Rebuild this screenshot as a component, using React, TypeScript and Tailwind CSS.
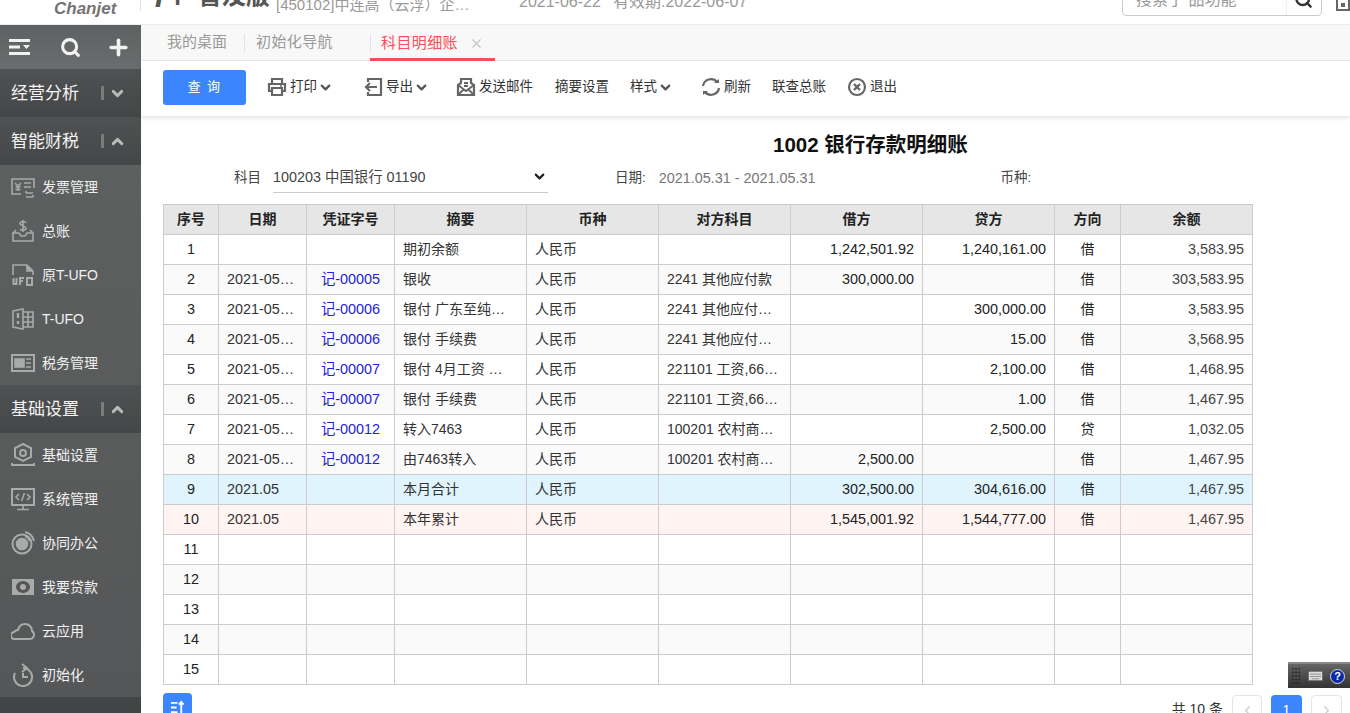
import { ChevronDown, ChevronUp, ChevronLeft, ChevronRight, Search, Plus, X } from "lucide-react";

const font = { fontFamily: '"Liberation Sans", "Noto Sans CJK SC", sans-serif' };

type Row = {
  no: number;
  date?: string;
  voucher?: string;
  summary?: string;
  cur?: string;
  other?: string;
  debit?: string;
  credit?: string;
  dir?: string;
  bal?: string;
  tone?: string;
};

const rows: Row[] = [
  { no: 1, summary: "期初余额", cur: "人民币", debit: "1,242,501.92", credit: "1,240,161.00", dir: "借", bal: "3,583.95" },
  { no: 2, date: "2021-05…", voucher: "记-00005", summary: "银收", cur: "人民币", other: "2241 其他应付款", debit: "300,000.00", dir: "借", bal: "303,583.95" },
  { no: 3, date: "2021-05…", voucher: "记-00006", summary: "银付 广东至纯…", cur: "人民币", other: "2241 其他应付…", credit: "300,000.00", dir: "借", bal: "3,583.95" },
  { no: 4, date: "2021-05…", voucher: "记-00006", summary: "银付 手续费", cur: "人民币", other: "2241 其他应付…", credit: "15.00", dir: "借", bal: "3,568.95" },
  { no: 5, date: "2021-05…", voucher: "记-00007", summary: "银付 4月工资 …", cur: "人民币", other: "221101 工资,66…", credit: "2,100.00", dir: "借", bal: "1,468.95" },
  { no: 6, date: "2021-05…", voucher: "记-00007", summary: "银付 手续费", cur: "人民币", other: "221101 工资,66…", credit: "1.00", dir: "借", bal: "1,467.95" },
  { no: 7, date: "2021-05…", voucher: "记-00012", summary: "转入7463", cur: "人民币", other: "100201 农村商…", credit: "2,500.00", dir: "贷", bal: "1,032.05" },
  { no: 8, date: "2021-05…", voucher: "记-00012", summary: "由7463转入", cur: "人民币", other: "100201 农村商…", debit: "2,500.00", dir: "借", bal: "1,467.95" },
  { no: 9, date: "2021.05", summary: "本月合计", cur: "人民币", debit: "302,500.00", credit: "304,616.00", dir: "借", bal: "1,467.95", tone: "bg-[#dff4fd]" },
  { no: 10, date: "2021.05", summary: "本年累计", cur: "人民币", debit: "1,545,001.92", credit: "1,544,777.00", dir: "借", bal: "1,467.95", tone: "bg-[#fff4f1]" },
  { no: 11 },
  { no: 12 },
  { no: 13 },
  { no: 14 },
  { no: 15 },
];

const heads = ["序号", "日期", "凭证字号", "摘要", "币种", "对方科目", "借方", "贷方", "方向", "余额"];
const widths = ["w-[55px]", "w-[88px]", "w-[88px]", "w-[132px]", "w-[132px]", "w-[132px]", "w-[132px]", "w-[132px]", "w-[66px]", "w-[132px]"];

function Icon({ children }: { children: React.ReactNode }) {
  return (
    <svg viewBox="0 0 24 24" className="w-[24px] h-[24px] shrink-0" fill="none" stroke="#a9abab" strokeWidth={1.6}>
      {children}
    </svg>
  );
}

const smartItems: [string, React.ReactNode][] = [
  ["发票管理", <Icon><path d="M10 19H1V4h22v9" /><path d="M4 8l3 3 3-3M7 11v5M4.500 12h5M4.500 14.500h5M13 8h7M13 12h7" /><path d="M15 18h7M15 22h7M15 16v2M22 20v2" /></Icon>],
  ["总账", <Icon><path d="M2 14v8h20v-8l-3-3M5 11l-3 3h6l2 3h4l2-3h6" /><path d="M15 4c-1-2-5-2-6 0s5 3 6 5-5 3-6 1M12 1v12" /></Icon>],
  ["原T-UFO", <Icon><path d="M2 12V2h14l6 6v4" /><path d="M16 2v6h6" fill="#a9abab" /><path d="M2.500 15v6h3v-6M9 22v-7h4M9 18h3M16 15h5v7h-5z" strokeWidth={2} /></Icon>],
  ["T-UFO", <Icon><path d="M2 4l10-2v20L2 20zM12 5h10v15H12M12 10h10M12 15h10M17 5v15" /><path d="M7 6v5M7 14v3" strokeWidth={2.400} /></Icon>],
  ["税务管理", <Icon><rect x="1" y="4" width="22" height="16" strokeWidth={2} /><rect x="4" y="8" width="9" height="8" fill="#a9abab" /><path d="M15 8h5M15 12h5M15 16h5" /></Icon>],
];

const baseItems: [string, React.ReactNode][] = [
  ["基础设置", <Icon><path d="M12 1l8 4v9l-8 4-8-4V5z" strokeWidth={2} /><circle cx="12" cy="10" r="3" strokeWidth={2} /><path d="M1 20v2h22v-2" strokeWidth={2} /></Icon>],
  ["系统管理", <Icon><rect x="1" y="2" width="22" height="16" strokeWidth={2} /><path d="M8 7l-3 3 3 3M16 7l3 3-3 3M13.500 6l-3 8M12 18v4M6 22.500h12" /></Icon>],
  ["协同办公", <Icon><circle cx="11" cy="13" r="9.500" strokeWidth={2} /><circle cx="11" cy="13" r="5.500" fill="#a9abab" /><path d="M14 1c5 1 8 5 9 9M14 5c3 1 4 3 5 5" strokeWidth={2} /></Icon>],
  ["我要贷款", <Icon><rect x="1" y="4" width="22" height="16" fill="#a9abab" stroke="none" /><ellipse cx="12" cy="12" rx="7" ry="6" fill="#555" stroke="none" /><circle cx="12" cy="12" r="3" fill="#a9abab" stroke="none" /></Icon>],
  ["云应用", <Icon><path d="M6 20H4a3.500 3.500 0 0 1-1-7c1-1 2-2 4-2 1-4 4-6 7-6 4 0 7 3 7 7 2 1 2 3 2 4s-1 4-4 4z" strokeWidth={2} /></Icon>],
  ["初始化", <Icon><path d="M12 5a9 9 0 1 1-8 5" strokeWidth={2} /><path d="M11 1l5 4-5 4M12 10v4h5" strokeWidth={2} /></Icon>],
];

function Group({ label, open }: { label: string; open: boolean }) {
  return (
    <div className="h-[48px] shrink-0 flex items-center pl-[11px] bg-gradient-to-b from-[#4f5152] to-[#454647]">
      <span className="w-[90px] text-[17px] text-[#f4f4f4] pt-[2px]">{label}</span>
      <span className="w-[3px] h-[14px] bg-[#7a7c7c]" />
      <span className="ml-[5px] text-[#b9bbbb]">
        {open ? <ChevronUp size={17} strokeWidth={4} /> : <ChevronDown size={17} strokeWidth={4} />}
      </span>
    </div>
  );
}

function MenuItem({ label, icon }: { label: string; icon: React.ReactNode }) {
  return (
    <div className="h-[44px] flex items-center pl-[11px] gap-[7px] text-[14px] text-[#f1f1f1]">
      {icon}
      <span>{label}</span>
    </div>
  );
}

function ToolBtn({ icon, label, more, className }: { icon?: React.ReactNode; label: string; more?: boolean; className?: string }) {
  return (
    <div className={`flex items-center text-[13.500px] text-[#333] ${className ?? ""}`}>
      {icon}
      <span className={icon ? "ml-[3px]" : ""}>{label}</span>
      {more && <ChevronDown size={15} strokeWidth={3.500} className="ml-[1px] text-[#555]" />}
    </div>
  );
}

function Glyph({ children }: { children: React.ReactNode }) {
  return (
    <svg viewBox="0 0 20 20" className="w-[20px] h-[20px] shrink-0" fill="none" stroke="#666" strokeWidth={2.200}>
      {children}
    </svg>
  );
}

function Watermark({ className }: { className: string }) {
  return (
    <div className={`absolute -rotate-[22deg] text-[21px] leading-[27px] tracking-[1px] text-black/[0.02] pointer-events-none ${className}`}>
      <div>林冬菁8338</div>
      <div>06220852</div>
    </div>
  );
}

export default function App() {
  return (
    <div style={font} className="relative w-[1350px] h-[713px] overflow-hidden bg-white flex flex-col">
      {/* Top bar, scrolled partly out of view */}
      <header className="h-[25px] shrink-0 overflow-hidden flex items-start border-b border-[#eeeeee]">
        <div className="w-[140px] shrink-0 pl-[54px] text-[#747474] font-bold italic text-[17px] leading-[18px]">Chanjet</div>
        <div className="w-[1px] h-[11px] bg-[#e0e0e0]" />
        <span className="ml-[9px] w-[48px] mt-[-18px] text-[#555] font-bold italic text-[30px] leading-[30px]">T+</span>
        <span className="w-[72px] mt-[-16px] text-[#555] font-bold text-[24px] leading-[24px] whitespace-nowrap">普及版</span>
        <span className="ml-[6px] w-[243px] mt-[-5px] text-[#999] text-[15px] leading-[20px] whitespace-nowrap">[450102]中连高（云浮）企…</span>
        <span className="w-[94px] mt-[-8px] text-[#999] text-[16px] leading-[20px] whitespace-nowrap">2021-06-22</span>
        <span className="mt-[-8px] text-[#999] text-[16px] leading-[20px] whitespace-nowrap">有效期:2022-06-07</span>
        <div className="relative ml-auto w-[200px] h-[40px] mt-[-24px] border border-[#cccccc] rounded-[4px] flex items-end pl-[13px] pb-[5px]">
          <span className="text-[16px] leading-[20px] text-[#999] whitespace-nowrap">搜索子 品功能</span>
          <span className="absolute right-[34px] top-0 bottom-0 w-[1px] bg-[#f0f0f0]" />
          <Search size={19} strokeWidth={3} className="absolute right-[8px] bottom-[6px] text-[#333]" />
        </div>
        <div className="ml-[14px] w-[14px] h-[11px] border-2 border-t-0 border-[#666] flex justify-center">
          <span className="mt-[3px] w-[4px] h-[4px] bg-[#666]" />
        </div>
      </header>

      <div className="flex flex-1 min-h-0">
        {/* Sidebar */}
        <aside className="w-[141px] shrink-0 flex flex-col bg-gradient-to-b from-[#5f6262] to-[#555657]">
          <div className="h-[44px] shrink-0 flex items-center bg-gradient-to-b from-[#5e6162] to-[#6a6c6d] text-[#f2f2f2]">
            <svg viewBox="0 0 22 16" className="ml-[9px] w-[22px] h-[16px]" fill="#f2f2f2">
              <rect x="0" y="0" width="21" height="3" />
              <rect x="0" y="6.500" width="11" height="3" />
              <rect x="0" y="13" width="21" height="3" />
              <path d="M14 6h7l-3.500 4z" />
            </svg>
            <Search size={21} strokeWidth={3.500} className="ml-[29px]" />
            <Plus size={25} strokeWidth={3.500} className="ml-[25px]" />
          </div>
          <Group label="经营分析" open={false} />
          <Group label="智能财税" open />
          <div>
            {smartItems.map(([l, i]) => (
              <MenuItem key={l} label={l} icon={i} />
            ))}
          </div>
          <Group label="基础设置" open />
          <div>
            {baseItems.map(([l, i]) => (
              <MenuItem key={l} label={l} icon={i} />
            ))}
          </div>
          <div className="flex-1 bg-[#434445]" />
        </aside>

        <main className="flex-1 min-w-0 flex flex-col">
          {/* Tabs */}
          <div className="h-[36px] shrink-0 flex items-stretch bg-[#f8f8f8] border-b border-[#e6e6ee] text-[15px] text-[#999]">
            <div className="w-[103px] flex items-center pl-[26px] whitespace-nowrap">我的桌面</div>
            <div className="w-[1px] h-[18px] self-center bg-[#e2e2e8]" />
            <div className="w-[125px] flex items-center pl-[11px] whitespace-nowrap tracking-[0.4px]">初始化导航</div>
            <div className="w-[125px] flex items-center pl-[11px] text-[#ff4d59] border-b-[3px] border-[#ff4d59] pt-[3px] -mb-[1px] whitespace-nowrap tracking-[0.4px] relative">
              <span className="absolute left-0 top-[9px] w-[1px] h-[18px] bg-[#e2e2e8]" />
              科目明细账
              <X size={15} strokeWidth={1.800} className="ml-[11px] text-[#c4c4c4]" />
            </div>
          </div>

          {/* Toolbar */}
          <div className="h-[55px] shrink-0 flex items-center pl-[22px] pb-[3px] shadow-[0_2px_4px_rgba(0,0,0,0.12)] relative z-10 bg-white">
            <button className="w-[83px] h-[35px] rounded-[3px] bg-[#3b86ff] text-white text-[13px] tracking-[1.500px]">查 询</button>
            <ToolBtn
              className="ml-[21px]"
              label="打印"
              more
              icon={
                <Glyph>
                  <path d="M5 6V2h10v4M5 14H2V7h16v7h-3" />
                  <path d="M5 11h10v7H5z" />
                  <path d="M13 9h2" strokeWidth={1.500} />
                </Glyph>
              }
            />
            <ToolBtn
              className="ml-[30px]"
              label="导出"
              more
              icon={
                <Glyph>
                  <path d="M5 5V2h13v16H5v-3" />
                  <path d="M14 10H3M7 6l-4 4 4 4" />
                </Glyph>
              }
            />
            <ToolBtn
              className="ml-[27px]"
              label="发送邮件"
              icon={
                <Glyph>
                  <path d="M2 8l3-2V2h10v4l3 2v10H2z" />
                  <path d="M2 8l8 6 8-6M2 18l6-6M18 18l-6-6M8 6h4M8 9h4" strokeWidth={1.800} />
                </Glyph>
              }
            />
            <ToolBtn className="ml-[22px]" label="摘要设置" />
            <ToolBtn className="ml-[21px]" label="样式" more />
            <ToolBtn
              className="ml-[28px]"
              label="刷新"
              icon={
                <Glyph>
                  <path d="M2 9a8 8 0 0 1 14-4" />
                  <path d="M18 11a8 8 0 0 1-14 4" />
                  <path d="M13 6h5V2" fill="#666" stroke="none" />
                  <path d="M7 14H2v4" fill="#666" stroke="none" />
                </Glyph>
              }
            />
            <ToolBtn className="ml-[21px]" label="联查总账" />
            <ToolBtn
              className="ml-[21px]"
              label="退出"
              icon={
                <Glyph>
                  <circle cx="10" cy="10" r="8" />
                  <path d="M7 7l6 6M13 7l-6 6" strokeWidth={2.400} />
                </Glyph>
              }
            />
          </div>

          {/* Report */}
          <div className="flex-1 min-h-0 pl-[22px] relative">
            <h1 className="pt-[15px] pl-[610px] text-[20.500px] leading-[28px] font-bold text-[#111] whitespace-nowrap">1002 银行存款明细账</h1>
            <div className="mt-[1px] h-[33px] flex items-center text-[13.500px] text-[#444]">
              <span className="ml-[71px] pt-[4px]">科目</span>
              <div className="ml-[12px] w-[275px] h-[33px] border-b border-[#ccc] flex items-center justify-between text-[14.400px] pr-[1px] pt-[3px]">
                <span>100203 中国银行 01190</span>
                <ChevronDown size={15} strokeWidth={3.500} className="text-[#222] -mt-[3px]" />
              </div>
              <span className="ml-[67px] pt-[4px]">日期:</span>
              <span className="ml-[13px] pt-[4px] text-[14.400px] text-[#777]">2021.05.31 - 2021.05.31</span>
              <span className="ml-[185px] pt-[4px]">币种:</span>
            </div>
            <table className="mt-[11px] w-[1089px] table-fixed border-collapse text-[14.400px] text-[#222]">
              <thead>
                <tr className="h-[30px] bg-[#e6e6e6]">
                  {heads.map((h, i) => (
                    <th key={h} className={`${widths[i]} border border-[#cccccc] font-bold text-[14px] text-[#222]`}>{h}</th>
                  ))}
                </tr>
              </thead>
              <tbody>
                {rows.map((r, i) => {
                  const bg = r.tone ?? (i % 2 === 1 ? "bg-[#fafafa]" : "bg-white");
                  return (
                    <tr key={r.no} className={`h-[30px] ${bg}`}>
                      <td className="border border-[#cccccc] text-center">{r.no}</td>
                      <td className="border border-[#cccccc] px-[8px] whitespace-nowrap text-[#333]">{r.date}</td>
                      <td className="border border-[#cccccc] text-center text-[#2222dd]">{r.voucher}</td>
                      <td className="border border-[#cccccc] px-[8px] whitespace-nowrap text-[14px] text-[#333]">{r.summary}</td>
                      <td className="border border-[#cccccc] px-[8px] text-[14px] text-[#333]">{r.cur}</td>
                      <td className="border border-[#cccccc] px-[8px] whitespace-nowrap text-[14px] text-[#333]">{r.other}</td>
                      <td className="border border-[#cccccc] px-[8px] text-right">{r.debit}</td>
                      <td className="border border-[#cccccc] px-[8px] text-right">{r.credit}</td>
                      <td className="border border-[#cccccc] text-center text-[14px]">{r.dir}</td>
                      <td className="border border-[#cccccc] px-[8px] text-right text-[#444]">{r.bal}</td>
                    </tr>
                  );
                })}
              </tbody>
            </table>
            <div className="mt-[8px] h-[40px] flex items-start w-[1179px]">
              <div className="w-[29px] h-[29px] rounded-[4px] bg-[#3b86ff] flex items-center justify-center">
                <svg viewBox="0 0 16 16" className="w-[15px] h-[15px]" fill="none" stroke="#fff" strokeWidth={2}>
                  <path d="M1 3h7M1 8h6M1 13h7M12 14V3M9.500 5L12 2l2.500 3" />
                </svg>
              </div>
              <span className="ml-auto mt-[6px] text-[14px] text-[#333] whitespace-nowrap">共 10 条</span>
              <span className="ml-[9px] mt-[2px] w-[30px] h-[30px] rounded-[4px] border border-[#e5e5e5] flex items-center justify-center text-[#ccc]"><ChevronLeft size={15} /></span>
              <span className="ml-[9px] mt-[2px] w-[31px] h-[30px] rounded-[4px] bg-[#3b86ff] flex items-center justify-center text-white text-[14px]">1</span>
              <span className="ml-[9px] mt-[2px] w-[31px] h-[30px] rounded-[4px] border border-[#e5e5e5] flex items-center justify-center text-[#ccc]"><ChevronRight size={15} /></span>
            </div>
            <Watermark className="left-[1074px] top-[-52px]" />
            <Watermark className="left-[1074px] top-[83px]" />
            <Watermark className="left-[1074px] top-[218px]" />
            <Watermark className="left-[1074px] top-[353px]" />
            <Watermark className="left-[1074px] top-[488px]" />
          </div>
        </main>
      </div>

      {/* Input method bar */}
      <div className="absolute right-0 top-[662px] w-[62px] h-[26px] border-t-2 border-[#888] bg-gradient-to-b from-[#666] to-[#333] flex items-center pl-[4px] gap-[7px]">
        <svg viewBox="0 0 10 18" className="w-[9px] h-[18px]" fill="#222">
          {[1, 5, 9, 13, 17].flatMap((y) => [1, 4.500, 8].map((x) => <circle key={`${x}-${y}`} cx={x} cy={y} r="1" />))}
        </svg>
        <svg viewBox="0 0 16 12" className="w-[15px] h-[12px]" fill="#ddd" stroke="#555" strokeWidth={0.6}>
          <rect x="0.500" y="1" width="15" height="10" />
          <path d="M2 4h12M2 6.500h12M4 9h8" />
        </svg>
        <span className="w-[15px] h-[15px] rounded-full bg-[#0a2aa8] border border-[#ddd] flex items-center justify-center text-white text-[11px] font-bold leading-none">?</span>
      </div>
    </div>
  );
}
